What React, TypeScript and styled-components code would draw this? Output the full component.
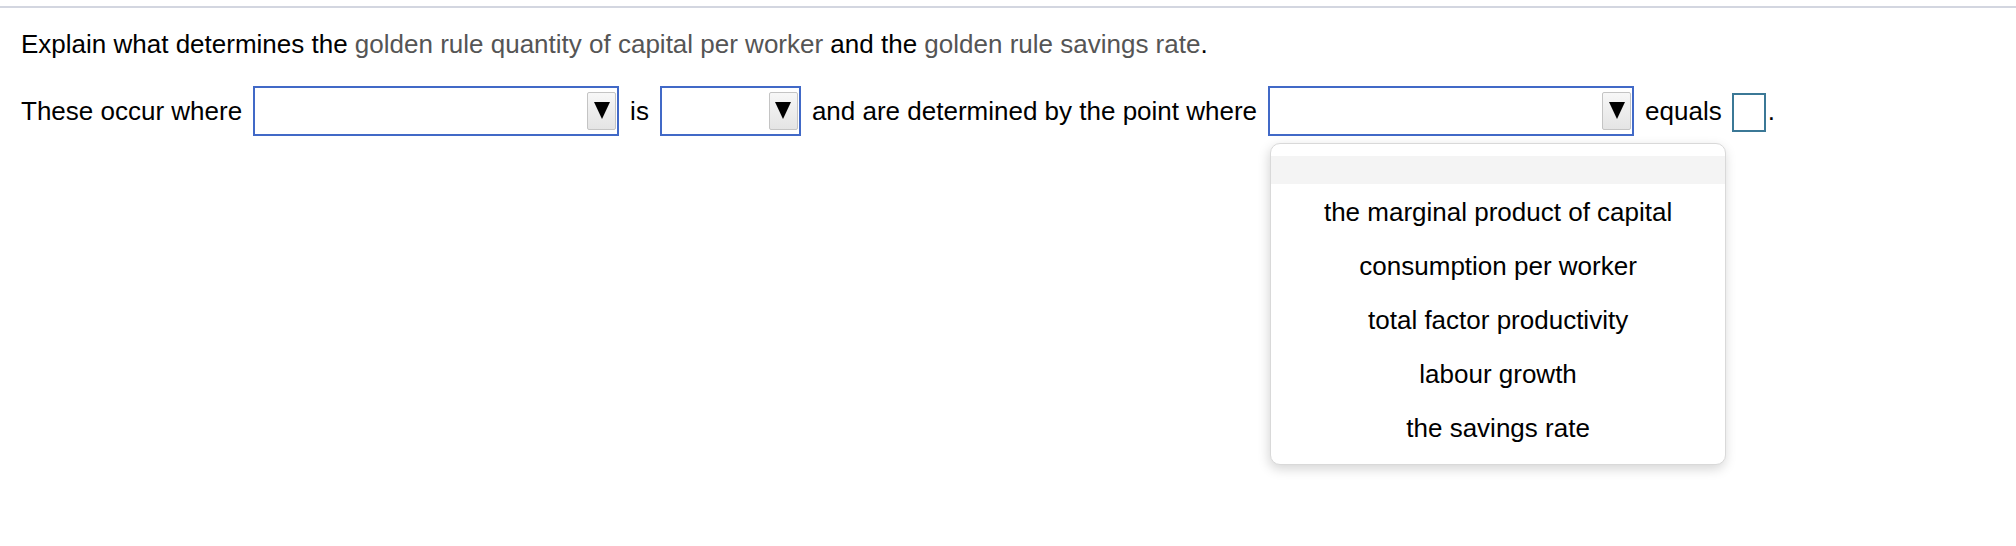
import React from "react";
import styled, { createGlobalStyle } from "styled-components";

const GlobalStyle = createGlobalStyle`
  html, body {
    margin: 0;
    background: #fff;
    color: #000;
    font-family: "Liberation Sans", Arial, Helvetica, sans-serif;
  }
`;

const Page = styled.div`
  box-sizing: border-box;
  min-height: 546px;
  padding-top: 6px;
`;

const Rule = styled.div`
  height: 2px;
  background: #d3d6e0;
`;

const Content = styled.div`
  padding: 0 21px;
  font-size: 26px;
  line-height: 30px;
`;

const Prompt = styled.p`
  margin: 21px 0 0;
`;

const Term = styled.span`
  color: #555;
`;

const Row = styled.div`
  display: flex;
  align-items: center;
  gap: 11px;
  margin-top: 27px;
  white-space: nowrap;
`;

const SelectWrap = styled.div`
  position: relative;
`;

const SelectBox = styled.div<{ $width: number }>`
  box-sizing: border-box;
  width: ${(p) => p.$width}px;
  height: 50px;
  border: 2px solid #4169c7;
  background: #fff;
  display: flex;
  align-items: center;
  justify-content: flex-end;
  padding-right: 1px;
`;

const ArrowButton = styled.div`
  box-sizing: border-box;
  width: 29px;
  height: 38px;
  border: 1px solid #c4c4c4;
  border-radius: 2px;
  background: linear-gradient(#f7f7f7, #e4e4e4);
  display: flex;
  align-items: center;
  justify-content: center;
`;

const Triangle = styled.span`
  width: 0;
  height: 0;
  border-left: 8.5px solid transparent;
  border-right: 8.5px solid transparent;
  border-top: 17px solid #000;
  margin-bottom: 2px;
`;

const AnswerSlot = styled.span`
  display: flex;
  align-items: center;
  gap: 2px;
  margin-left: -1px;
`;

const AnswerBox = styled.span`
  box-sizing: border-box;
  width: 34px;
  height: 39px;
  border: 2px solid #3b7896;
  margin-top: 2px;
`;

const Menu = styled.ul`
  position: absolute;
  left: 2px;
  top: 57px;
  margin: 0;
  list-style: none;
  box-sizing: border-box;
  width: 456px;
  padding: 12px 0 11px;
  background: #fff;
  border: 1px solid #d9d9d9;
  border-radius: 10px;
  box-shadow: -1px 4px 12px rgba(0, 0, 0, 0.17);
  z-index: 2;
`;

const Option = styled.li`
  height: 25.9px;
  padding: 16px 0 12px;
  text-align: center;
  line-height: 25.9px;
`;

const EmptyOption = styled.li`
  height: 28px;
  background: #f4f4f4;
`;

const options = [
  "the marginal product of capital",
  "consumption per worker",
  "total factor productivity",
  "labour growth",
  "the savings rate",
];

const Select: React.FC<{ width: number; open?: boolean }> = ({ width, open }) => (
  <SelectWrap>
    <SelectBox $width={width}>
      <ArrowButton>
        <Triangle />
      </ArrowButton>
    </SelectBox>
    {open ? (
      <Menu role="listbox">
        <EmptyOption />
        {options.map((o) => (
          <Option key={o}>{o}</Option>
        ))}
      </Menu>
    ) : null}
  </SelectWrap>
);

export default function App() {
  return (
    <Page>
      <GlobalStyle />
      <Rule />
      <Content>
        <Prompt>
          Explain what determines the <Term>golden rule quantity of capital per worker</Term> and the{" "}
          <Term>golden rule savings rate</Term>.
        </Prompt>
        <Row>
          <span>These occur where</span>
          <Select width={366} />
          <span>is</span>
          <Select width={141} />
          <span>and are determined by the point where</span>
          <Select width={366} open={true} />
          <span>equals</span>
          <AnswerSlot>
            <AnswerBox />
            <span>.</span>
          </AnswerSlot>
        </Row>
      </Content>
    </Page>
  );
}
